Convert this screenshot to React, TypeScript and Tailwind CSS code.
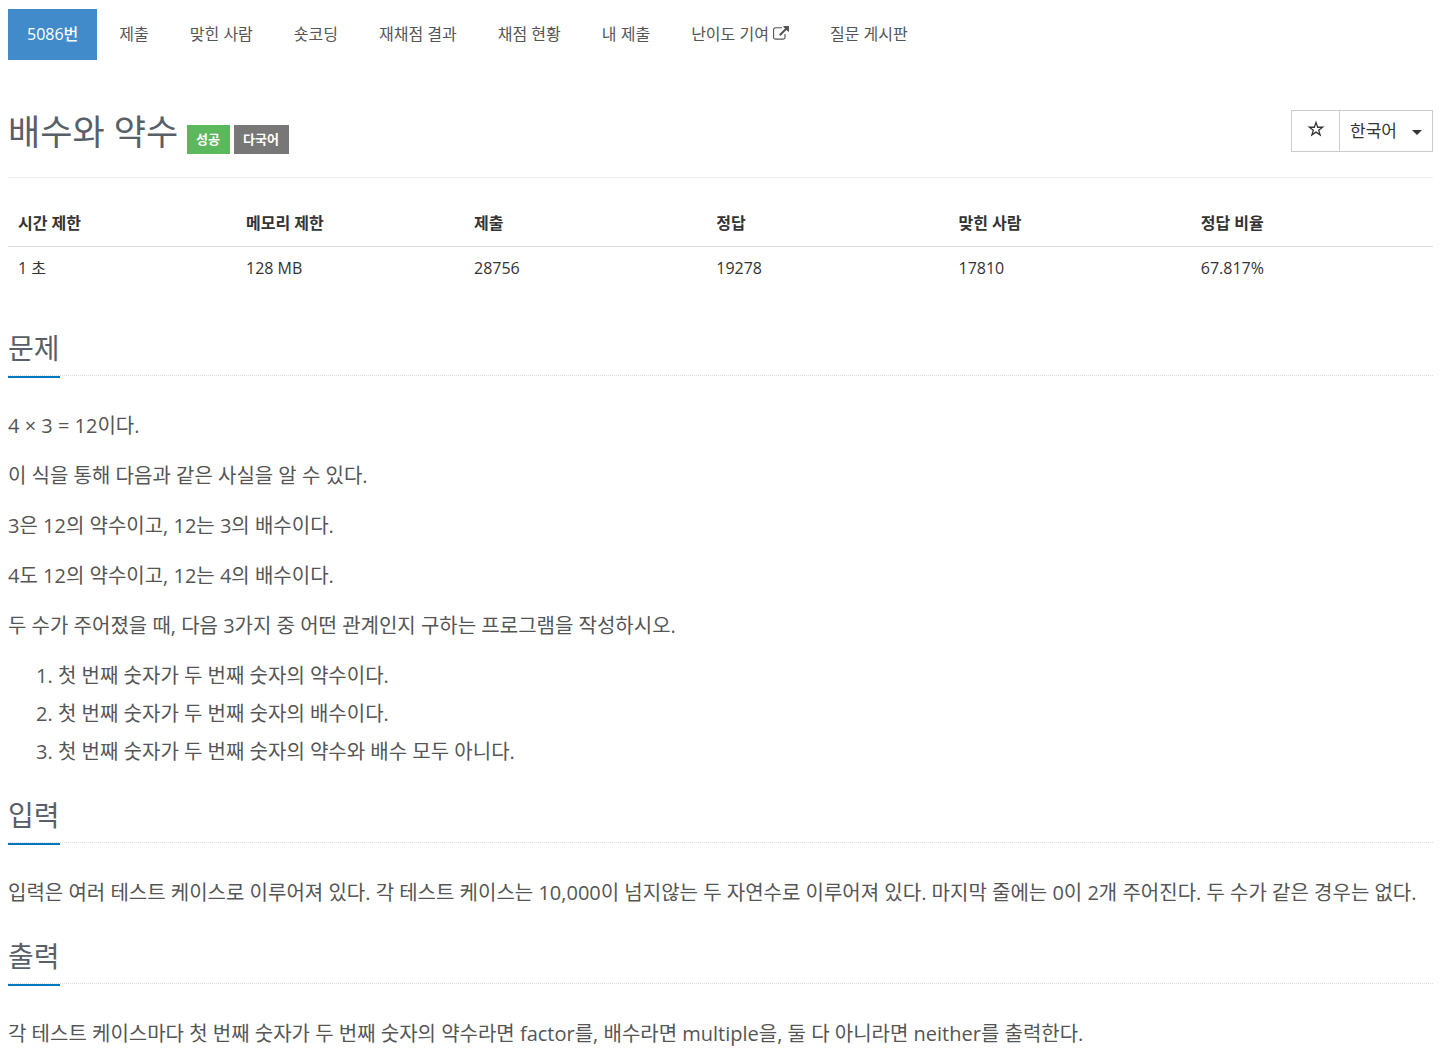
const tabs = ["5086번", "제출", "맞힌 사람", "숏코딩", "재채점 결과", "채점 현황", "내 제출", "난이도 기여", "질문 게시판"];

const info = [
  { label: "시간 제한", value: "1 초" },
  { label: "메모리 제한", value: "128 MB" },
  { label: "제출", value: "28756" },
  { label: "정답", value: "19278" },
  { label: "맞힌 사람", value: "17810" },
  { label: "정답 비율", value: "67.817%" },
];

function ExternalLinkIcon() {
  return (
    <svg viewBox="0 0 1792 1792" className="size-4" fill="currentColor">
      <path d="M1408 928v320q0 119-84.5 203.500t-203.500 84.500h-832q-119 0-203.500-84.500t-84.500-203.500v-832q0-119 84.500-203.500t203.500-84.500h704q14 0 23 9t9 23v64q0 14-9 23t-23 9h-704q-66 0-113 47t-47 113v832q0 66 47 113t113 47h832q66 0 113-47t47-113v-320q0-14 9-23t23-9h64q14 0 23 9t9 23zm384-864v512q0 26-19 45t-45 19-45-19l-176-176-652 652q-10 10-23 10t-23-10l-114-114q-10-10-10-23t10-23l652-652-176-176q-19-19-19-45t19-45 45-19h512q26 0 45 19t19 45z" />
    </svg>
  );
}

function StarIcon() {
  return (
    <svg viewBox="0 0 18 18" className="size-[18px]" fill="currentColor" fillRule="evenodd">
      <path d="M9 .5l2.100 6.100h6.400l-5.100 3.900 1.900 6.100L9 12.900l-5.300 3.700 1.900-6.100L.5 6.600h6.400zM9 4.200L7.800 8H4.400l2.700 2L6 13.300l3-2.100 3 2.100-1.100-3.300 2.700-2h-3.400z" />
    </svg>
  );
}

function Headline({ children }: { children: string }) {
  return (
    <div className="mt-[23px] mb-[31px] flex border-b border-dotted border-[#dddddd]">
      <h2 className="-mb-[3px] border-b-2 border-[#0076bd] pb-[7px] text-[28px] leading-[42px] text-[#585f69]">
        {children}
      </h2>
    </div>
  );
}

export default function App() {
  return (
    <div className="bg-white pt-[9px] pr-[6px] pb-4 pl-2 font-['Open_Sans','Noto_Sans_CJK_KR',sans-serif] text-[#333333]">
      <nav>
        <ul className="flex flex-wrap gap-[3px] text-base">
          {tabs.map((tab, i) => (
            <li key={tab}>
              <a
                href="#"
                className={
                  i === 0
                    ? "flex h-[51px] items-center bg-[#428bca] px-[19px] pb-[2px] font-medium text-white"
                    : "flex h-[51px] items-center gap-1 px-[19px] pb-[2px] text-[#555555]"
                }
              >
                {tab}
                {tab === "난이도 기여" && <ExternalLinkIcon />}
              </a>
            </li>
          ))}
        </ul>
      </nav>

      <header className="mt-[46px] flex items-start justify-between border-b border-[#eeeeee] pb-[19px]">
        <div className="flex items-end gap-1">
          <h1 className="mr-[5px] text-[35px] leading-[52px] text-[#585f69]">배수와 약수</h1>
          <span className="mb-1 bg-[#5cb85c] pr-[10px] pl-[9px] text-[13px] leading-[29px] font-semibold text-white">성공</span>
          <span className="mb-1 bg-[#777777] pr-[10px] pl-[9px] text-[13px] leading-[29px] font-semibold text-white">다국어</span>
        </div>
        <div className="mt-1 flex h-[42px] border border-[#cccccc]">
          <button type="button" aria-label="즐겨찾기" className="flex w-12 items-center justify-center border-r border-[#cccccc] pb-1">
            <StarIcon />
          </button>
          <div className="relative flex">
            <select aria-label="언어" className="w-[92px] appearance-none bg-transparent pl-[10px] text-[17px]">
              <option>한국어</option>
            </select>
            <svg viewBox="0 0 10 5" className="pointer-events-none absolute top-[19px] right-[10px] h-[5px] w-[10px]" fill="currentColor">
              <path d="M0 0h10L5 5z" />
            </svg>
          </div>
        </div>
      </header>

      <table className="mt-[22px] w-full table-fixed text-left text-base">
        <thead>
          <tr className="border-b border-[#dddddd]">
            {info.map((item, i) => (
              <th key={item.label} className={i < 2 ? "h-[46px] w-[16%] px-[10px] font-bold" : "h-[46px] w-[17%] px-[10px] font-bold"}>
                {item.label}
              </th>
            ))}
          </tr>
        </thead>
        <tbody>
          <tr>
            {info.map((item) => (
              <td key={item.label} className="h-[43px] px-[10px]">{item.value}</td>
            ))}
          </tr>
        </tbody>
      </table>

      <main className="pt-[15px] text-xl leading-[38px] text-[#555555]">
        <section>
          <Headline>문제</Headline>
          <p className="mb-3">4 × 3 = 12이다.</p>
          <p className="mb-3">이 식을 통해 다음과 같은 사실을 알 수 있다.</p>
          <p className="mb-3">3은 12의 약수이고, 12는 3의 배수이다.</p>
          <p className="mb-3">4도 12의 약수이고, 12는 4의 배수이다.</p>
          <p className="mb-3">두 수가 주어졌을 때, 다음 3가지 중 어떤 관계인지 구하는 프로그램을 작성하시오.</p>
          <ol className="mb-3 list-decimal pl-[50px]">
            <li>첫 번째 숫자가 두 번째 숫자의 약수이다.</li>
            <li>첫 번째 숫자가 두 번째 숫자의 배수이다.</li>
            <li>첫 번째 숫자가 두 번째 숫자의 약수와 배수 모두 아니다.</li>
          </ol>
        </section>
        <section>
          <Headline>입력</Headline>
          <p className="mb-3">
            입력은 여러 테스트 케이스로 이루어져 있다. 각 테스트 케이스는 10,000이 넘지않는 두 자연수로 이루어져 있다. 마지막 줄에는 0이 2개 주어진다. 두 수가 같은 경우는 없다.
          </p>
        </section>
        <section>
          <Headline>출력</Headline>
          <p className="mb-3">
            각 테스트 케이스마다 첫 번째 숫자가 두 번째 숫자의 약수라면 factor를, 배수라면 multiple을, 둘 다 아니라면 neither를 출력한다.
          </p>
        </section>
      </main>
    </div>
  );
}
